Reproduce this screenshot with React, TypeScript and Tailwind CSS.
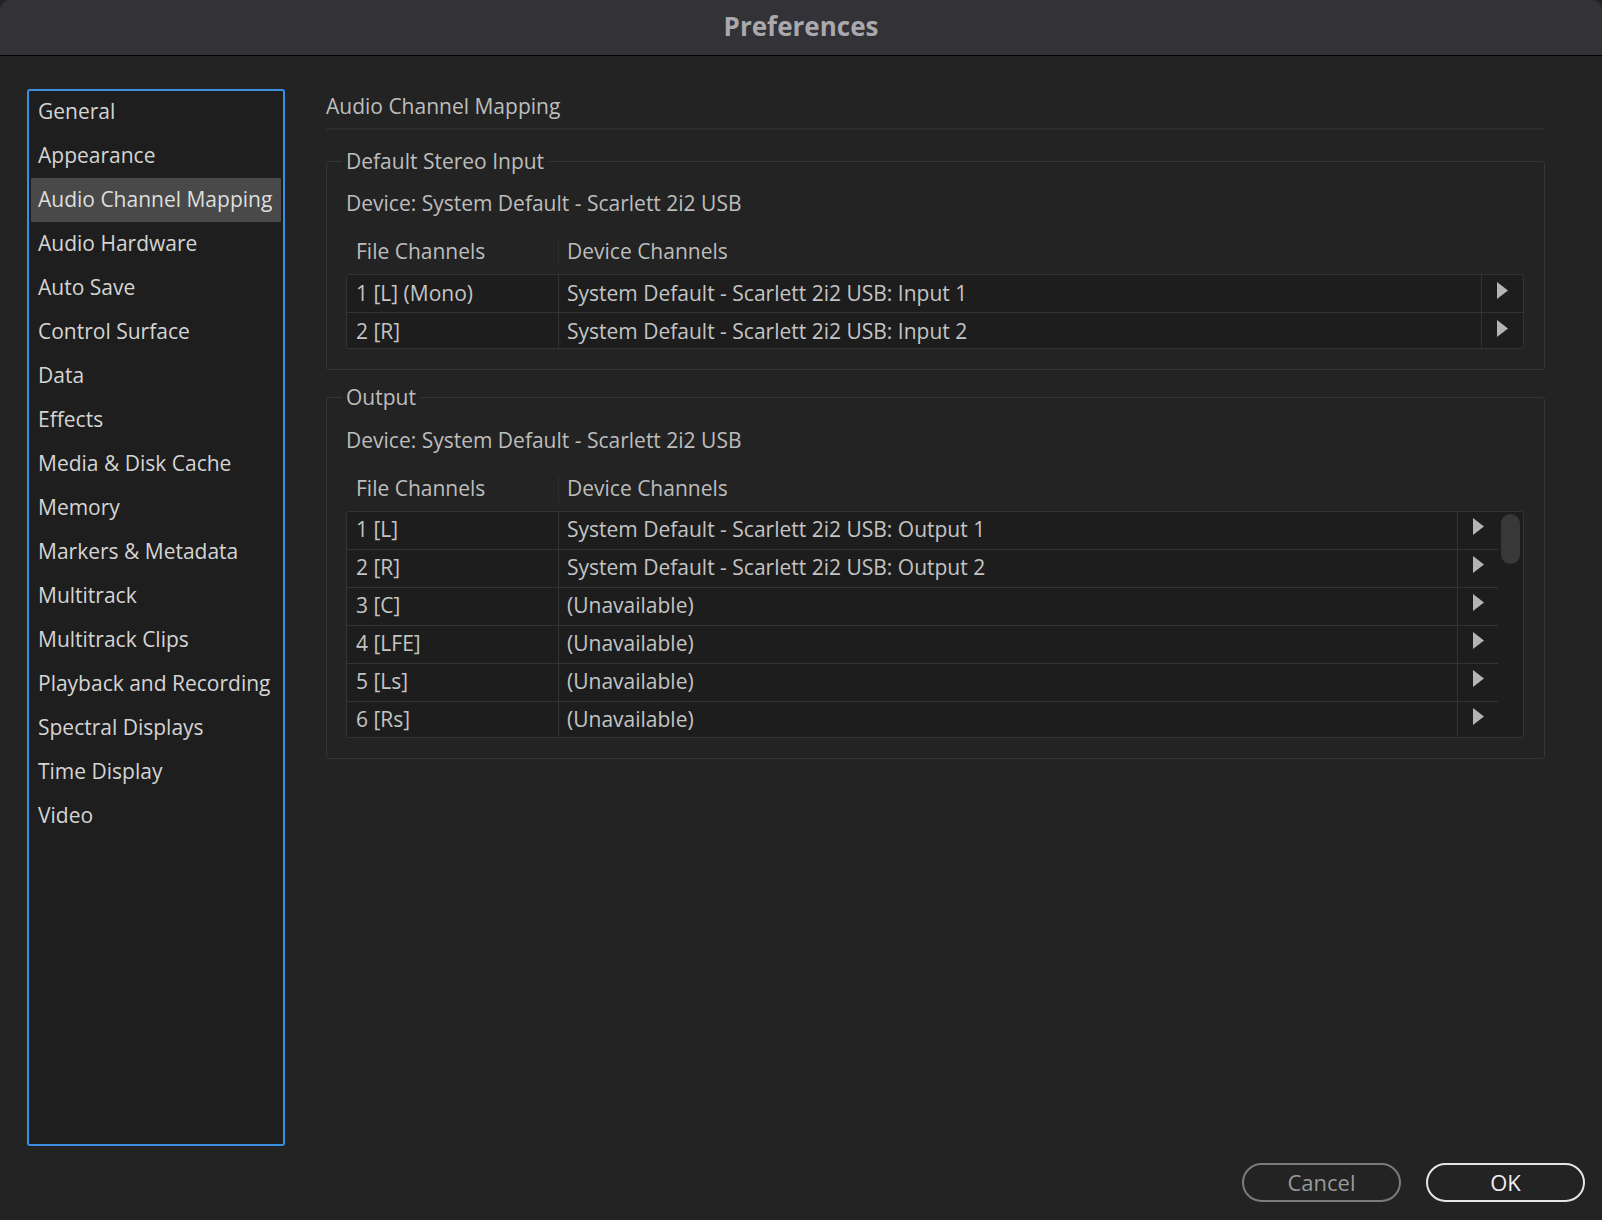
import React from 'react';

const sections = [
  'General',
  'Appearance',
  'Audio Channel Mapping',
  'Audio Hardware',
  'Auto Save',
  'Control Surface',
  'Data',
  'Effects',
  'Media & Disk Cache',
  'Memory',
  'Markers & Metadata',
  'Multitrack',
  'Multitrack Clips',
  'Playback and Recording',
  'Spectral Displays',
  'Time Display',
  'Video',
];

const inputRows = [
  ['1 [L] (Mono)', 'System Default - Scarlett 2i2 USB: Input 1'],
  ['2 [R]', 'System Default - Scarlett 2i2 USB: Input 2'],
];

const outputRows = [
  ['1 [L]', 'System Default - Scarlett 2i2 USB: Output 1'],
  ['2 [R]', 'System Default - Scarlett 2i2 USB: Output 2'],
  ['3 [C]', '(Unavailable)'],
  ['4 [LFE]', '(Unavailable)'],
  ['5 [Ls]', '(Unavailable)'],
  ['6 [Rs]', '(Unavailable)'],
];

const Arrow = () => (
  <svg width="11" height="17" viewBox="0 0 11 17" className="block">
    <path d="M0 0 L11 8.5 L0 17 Z" fill="#b4b4b4" />
  </svg>
);

const TableHeader = () => (
  <div className="flex h-[36px] items-center text-[#bdbdbd]">
    <div className="w-[212px] pl-[10px]">File Channels</div>
    <div className="h-[28px] w-px bg-[#2e2e2e]" />
    <div className="pl-[8px]">Device Channels</div>
  </div>
);

// a mapping row: file channel | device channel | arrow
const Row = ({ file, device, last, arrowW }: { file: string; device: string; last: boolean; arrowW: string }) => (
  <div className={`flex items-start ${last ? 'h-[35px] overflow-hidden' : 'h-[38px] border-b border-[#333333]'}`}>
    <div className="flex h-[37px] w-[212px] shrink-0 items-center pl-[9px] border-r border-[#333333]">{file}</div>
    <div className="flex h-[37px] flex-1 items-center pl-[8px] border-r border-[#333333]">{device}</div>
    <div className={`flex h-[37px] shrink-0 items-center justify-center pb-[7px] ${arrowW}`}>
      <Arrow />
    </div>
  </div>
);

const Group = ({ label, children }: { label: string; children: React.ReactNode }) => (
  <fieldset className="rounded-[3px] border border-[#353535] pl-[19px] pr-[20px] pb-[20px]">
    <legend className="-ml-1 px-1 text-[#bdbdbd]">{label}</legend>
    <div className="mt-[11px] h-[46px] text-[#bdbdbd]">Device: System Default - Scarlett 2i2 USB</div>
    {children}
  </fieldset>
);

export default function App() {
  return (
    <div
      className="flex h-[1220px] w-[1602px] flex-col bg-[#232323] text-[21px] text-[#c4c4c4]"
      style={{ fontFamily: '"Open Sans", "Noto Sans", sans-serif' }}
    >
      <div className="flex h-[56px] items-center justify-center rounded-t-[10px] border-b border-black bg-[#333237]">
        <span className="pb-[2px] text-[26px] font-bold text-[#a9a9ad]">Preferences</span>
      </div>

      <div className="flex flex-1 pt-[33px]">
        <div className="ml-[27px] h-[1057px] w-[258px] rounded-[3px] border-2 border-[#3b8fe3] bg-[#1e1e1e]">
          <ul className="-mt-[1px]">
            {sections.map((s) => (
              <li
                key={s}
                className={`mx-[2px] flex h-[44px] items-center px-[7px] ${
                  s === 'Audio Channel Mapping' ? 'bg-[#494949] text-[#dedede]' : 'text-[#d4d4d4]'
                }`}
              >
                {s}
              </li>
            ))}
          </ul>
        </div>

        <div className="ml-[41px] w-[1219px]">
          <div className="border-b-2 border-[#2c2c2c] pb-[5px] pt-[2px] text-[#bdbdbd]">Audio Channel Mapping</div>

          <div className="mt-[16px]">
            <Group label="Default Stereo Input">
              <TableHeader />
              <div className="mt-[4px] rounded-[3px] border border-[#333333] bg-[#1d1d1d]">
                {inputRows.map(([f, d], i) => (
                  <Row key={f} file={f} device={d} last={i === inputRows.length - 1} arrowW="w-[41px]" />
                ))}
              </div>
            </Group>
          </div>

          <div className="mt-[12px]">
            <Group label="Output">
              <TableHeader />
              <div className="mt-[4px] flex rounded-[3px] border border-[#333333] bg-[#1d1d1d]">
                <div className="flex-1">
                  {outputRows.map(([f, d], i) => (
                    <Row key={f} file={f} device={d} last={i === outputRows.length - 1} arrowW="w-[40px]" />
                  ))}
                </div>
                <div className="w-[25px] pl-[3px] pt-[2px]">
                  <div className="h-[50px] w-[19px] rounded-full bg-[#383838]" />
                </div>
              </div>
            </Group>
          </div>
        </div>
      </div>

      <div className="flex justify-end gap-[25px] pb-[18px] pr-[17px] pt-[17px]">
        <button className="h-[39px] w-[159px] rounded-full border-2 border-[#7b7b7b] text-[22px] text-[#9a9a9a]">
          Cancel
        </button>
        <button className="h-[39px] w-[159px] rounded-full border-2 border-[#e6e6e6] text-[22px] text-[#f0f0f0]">
          OK
        </button>
      </div>
    </div>
  );
}
